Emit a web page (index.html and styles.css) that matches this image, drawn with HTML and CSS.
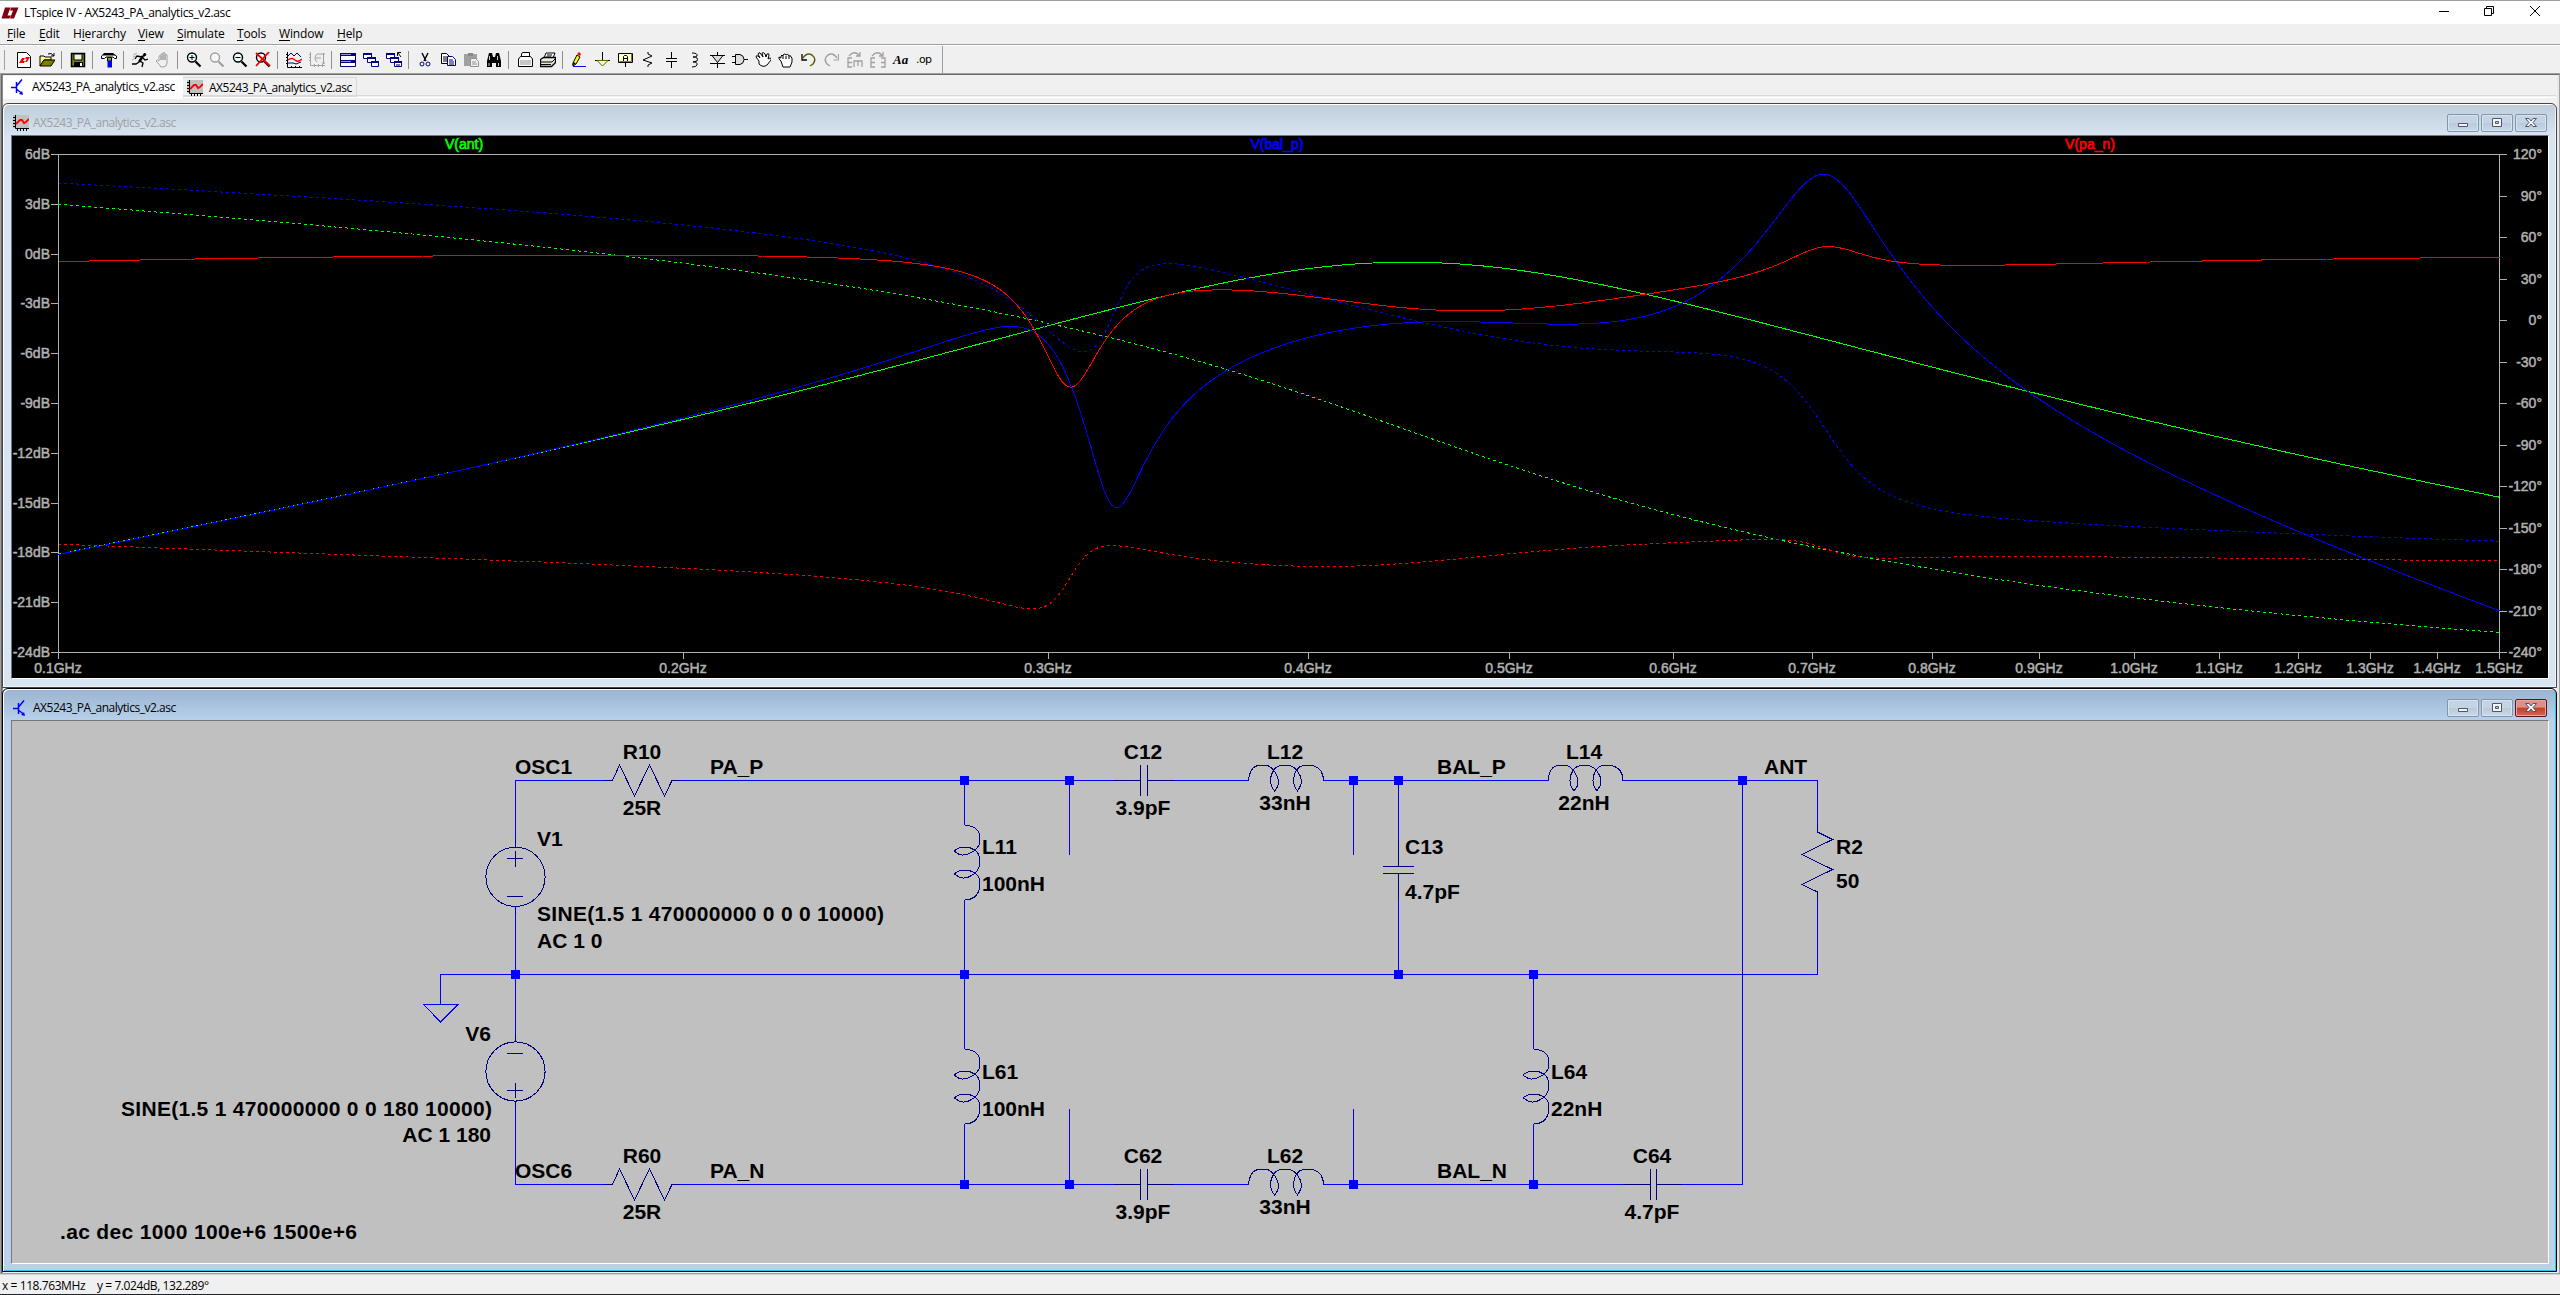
FILE: index.html
```html
<!DOCTYPE html>
<html lang="en">
<head>
<meta charset="utf-8">
<title>LTspice IV - AX5243_PA_analytics_v2.asc</title>
<link rel="stylesheet" href="styles.css">
</head>
<body>
<svg class="defs" aria-hidden="true">
  <defs>
    <symbol id="i-bjt" viewBox="0 0 16 16"><path d="M0 8.5h5M5.500 3v11M6 6.500l5-6M6 10.500l5 4" fill="none" stroke="#00f" stroke-width="1.500"/><path d="M12 16l-4-1 3-3z" fill="#00f"/></symbol>
    <symbol id="i-wave" viewBox="0 0 16 16"><path d="M0 0h16v13H0z" fill="#c0c0c0"/><path d="M2.500 0v13.500H16M0 2.500h2M0 5.500h2M0 8.500h2M0 11.500h2M4.500 14v2M7.500 14v2M10.500 14v2M13.500 14v2" fill="none" stroke="#000"/><path d="M3 9l4-4 2 0 2 3 2-1 3-3" fill="none" stroke="#f00" stroke-width="1.800"/></symbol>
    <symbol id="i-mag" viewBox="0 0 16 16"><circle cx="6" cy="5.500" r="4.500" fill="#e8ffff" stroke="currentColor" stroke-width="1.400"/><path d="M9.500 9.500l5 5" stroke="currentColor" stroke-width="2.200"/></symbol>
    <symbol id="i-casc" viewBox="0 0 16 16"><g fill="#fff" stroke="#000080"><path d="M.5 1.500h8v5h-8zM4.500 5.500h8v5h-8zM8.500 9.500h7v5h-7z"/></g><path d="M0 1h9v2H0zM4 5h9v2H4zM8 9h8v2H8z" fill="#000080"/></symbol>
    <symbol id="ind" viewBox="0 -16 76 28" overflow="visible"><path d="M0 0C1-9 4-15 11-15H19C26-12 30-4 30 2C30 6 28 8 26 10.500C24 8 22 5 22 0C22-7 26-15 34-15H41C48-13 53-5 53 1C53 6 50 8 49 10.500C47 8 45 5 45 0C45-7 49-15 56-15H64C71-13 75-8 75 0"/></symbol>
  </defs>
</svg>

<header class="titlebar">
  <svg class="logo" viewBox="0 0 16 12"><path d="M3 .5h5.500L5.500 8.500H9l-1.500 3H-.5zM9 .5h7.500l-4.500 11H8l3-8H8z" fill="#800010"/></svg>
  <span class="app-title ui">LTspice IV - AX5243_PA_analytics_v2.asc</span>
  <svg class="sysbtns" viewBox="0 0 110 24" fill="none" stroke="#000"><path d="M3 11.500h10M48.500 8.500h7v7h-7zM50.500 8.500v-2h7v7h-2M94 6l10 10M104 6l-10 10"/></svg>
</header>

<nav class="menubar ui">
  <span class="m-file"><u>F</u>ile</span><span class="m-edit"><u>E</u>dit</span><span class="m-hier">H<u>i</u>erarchy</span><span class="m-view"><u>V</u>iew</span><span class="m-sim"><u>S</u>imulate</span><span class="m-tools"><u>T</u>ools</span><span class="m-win"><u>W</u>indow</span><span><u>H</u>elp</span>
</nav>

<div class="toolbar">
  <i class="grip"></i>
  <svg class="ic" viewBox="0 0 16 16"><path d="M1.500.5h9l4 4v11h-13z" fill="#fff" stroke="#000"/><path d="M3 11l3-5h3l-2 3h2l-1 2zM9 10l2-3h-2l1-2h4l-3 5z" fill="#f00"/></svg>
  <svg class="ic" viewBox="0 0 16 16"><path d="M1 4h4l1 1h6v3H5l-4 6z" fill="#ffff80" stroke="#000"/><path d="M1 14l4-6h11l-4 6z" fill="#808000" stroke="#000"/><path d="M9 2q3-2 6 2m0-3v3h-3" fill="none" stroke="#000"/></svg>
  <i class="sep"></i>
  <svg class="ic" viewBox="0 0 16 16"><path d="M1.500 1.500h13v13h-13z" fill="#808000" stroke="#000" stroke-width="1.500"/><path d="M4 2h8v6H4z" fill="#f0f0f0" stroke="#000"/><path d="M4 10h9v5H4z" fill="#000"/><path d="M10 11h2v3h-2z" fill="#fff"/></svg>
  <i class="sep"></i>
  <svg class="ic" viewBox="0 0 16 16"><path d="M.5 6.500V4l3-2.500h8L15.500 4v2.500h-2L12 5H5L3.500 6.500z" fill="#fff" stroke="#000"/><path d="M3 1h9l2 2.500H1.500z" fill="#000"/><path d="M6.500 5.500h4V9h-4z" fill="#888" stroke="#000"/><path d="M6.500 9h4.500v6.500H6.500z" fill="#00f"/></svg>
  <i class="sep"></i>
  <svg class="ic" viewBox="0 0 16 16" fill="none" stroke="#000"><path d="M12 1.500l2 .5-1 2h-2z" fill="#000"/><path d="M11 4L7 10" stroke-width="2.500"/><path d="M10 5L5 4 3 7M11 6l2 2 3-1M8 9l3 2-1 4M7 10l-3 2-4 0" stroke-width="1.300"/><path d="M1 3l4-2M1 5l3-1M0 8l2-1" stroke="#aaa"/></svg>
  <svg class="ic" viewBox="0 0 16 16" fill="#f0f0f0" stroke="#a0a0a0"><path d="M4 9V4q1-1 2 0v4-6q1-1 2 0v6-7q1-1 2 0v7-5q1-1 2 0v8q0 4-4 4H6q-1-2-5-6 1-2 3 0z"/></svg>
  <i class="sep"></i>
  <svg class="ic" viewBox="0 0 16 16"><use href="#i-mag"/><path d="M3.500 5.500h5M6 3v5" stroke="#000"/></svg>
  <svg class="ic dim" viewBox="0 0 16 16"><use href="#i-mag"/></svg>
  <svg class="ic" viewBox="0 0 16 16"><use href="#i-mag"/><path d="M3.500 5.500h5" stroke="#000"/></svg>
  <svg class="ic" viewBox="0 0 16 16"><use href="#i-mag"/><path d="M1 1l14 13M14 0L1 14" stroke="#e00" stroke-width="1.800"/></svg>
  <i class="sep"></i>
  <svg class="ic" viewBox="0 0 16 16" fill="none"><path d="M1.500 0v15.500H16M0 2.500h2M0 5.500h2M0 8.500h2M0 11.500h2M5.500 14v2M9.500 14v2M13.500 14v2" stroke="#000"/><path d="M2 4l3-3 3 3 3-3 4 4" stroke="#000080"/><path d="M2 8q4-3 7 0t7-1" stroke="#f00" stroke-width="1.300"/><path d="M2 11h5l3 1 5-2" stroke="#000080"/></svg>
  <svg class="ic" viewBox="0 0 16 16" fill="none" stroke="#a0a0a0"><path d="M1.500 0v13.500H16M0 2.500h2M0 5.500h2M0 8.500h2M5.500 12v3M9.500 12v3M13.500 12v3M8 10q-4-4 0-8h5M7 6h5M14.500 1v11M13 2h3M13 11h3"/></svg>
  <i class="sep"></i>
  <svg class="ic" viewBox="0 0 16 16"><path d="M.5 1.500h15v13H.5z" fill="#fff" stroke="#000080"/><path d="M0 1h16v3H0zM0 8h16v3H0z" fill="#000080"/><path d="M1 2.500h10M1 9.500h10" stroke="#fff" stroke-width=".6"/></svg>
  <svg class="ic" viewBox="0 0 16 16"><use href="#i-casc"/></svg>
  <svg class="ic" viewBox="0 0 16 16"><use href="#i-casc"/><path d="M15 5l-3-4M11.500 4V.5H15M10 13h4" fill="none" stroke="#000"/></svg>
  <i class="sep"></i>
  <svg class="ic" viewBox="0 0 16 16" fill="none"><path d="M5 1l4 8M11 1L7 9" stroke="#000" stroke-width="1.400"/><circle cx="5" cy="12" r="2" stroke="#000080"/><circle cx="11" cy="12" r="2" stroke="#000080"/></svg>
  <svg class="ic" viewBox="0 0 16 16" fill="#fff"><path d="M1.500 1.500h5l3 3v7h-8z" stroke="#000"/><path d="M3 5h4M3 7h4M3 9h4" stroke="#000"/><path d="M7.500 4.500h5l3 3v6h-8z" stroke="#000080"/><path d="M9 8h4M9 10h5M9 12h5" stroke="#000080"/></svg>
  <svg class="ic" viewBox="0 0 16 16"><path d="M1 2h13v12H1z" fill="#a0a0a0"/><path d="M5 1h5v3H5z" fill="#888"/><path d="M7.500 6.500h5l3 3v5h-8z" fill="#f0f0f0" stroke="#909090"/><path d="M9 10h4M9 12h5" stroke="#909090"/></svg>
  <svg class="ic" viewBox="0 0 16 16"><path d="M3 1h3l1 4h2l1-4h3l2 8v6h-5v-4H6v4H1V9z" fill="#000"/><path d="M3.500 4v4M11.500 4v4M3 11v3M12.500 11v3" stroke="#fff" stroke-width=".8"/></svg>
  <i class="sep"></i>
  <svg class="ic" viewBox="0 0 16 16"><path d="M4.500 5v-3l1-1.500h7v4" fill="#fff" stroke="#000"/><path d="M1.500 7l2-2.500h10l2 2.500v7.500h-14z" fill="#fff" stroke="#000"/><path d="M3 8h11v5H3z" fill="#c8c8c8"/></svg>
  <svg class="ic" viewBox="0 0 16 16"><path d="M4 6l2-5h9l-2 5z" fill="#fff" stroke="#000"/><path d="M7 3h5M6 5h5" stroke="#000"/><path d="M.5 7.500l3-2h12v5l-4 4H.5z" fill="#e8e8e8" stroke="#000" stroke-width="1.300"/><path d="M1 10h11l3-3M1 12.500h10" fill="none" stroke="#000"/><path d="M6 11h4v1H6z" fill="#ff0"/></svg>
  <i class="sep"></i>
  <svg class="ic" viewBox="0 0 16 16"><path d="M2 11l4-8 3 2-4 7-3 2z" fill="#ff0" stroke="#000"/><path d="M6 2l2-2 2 2-1 2z" fill="#f00"/><path d="M1 13l2-3 2 2z" fill="#000"/><path d="M2 14.500h13" stroke="#00f"/></svg>
  <svg class="ic" viewBox="0 0 16 16" fill="none" stroke="#000"><path d="M8.500 0v8M1 8.500h15"/><path d="M3 8.500l5.500 5.500L14 8.500z" stroke="#606000" fill="#f8f8d0"/></svg>
  <svg class="ic" viewBox="0 0 16 16"><path d="M1.500 1.500h14v9h-14z" fill="#ffffd0" stroke="#000"/><path d="M2.500 9.500h12v-8" fill="none" stroke="#808000"/><path d="M6.500 9V4.500l1-1h2l1 1V9M6.500 6.500h4M8.500 11v4" fill="none" stroke="#000"/></svg>
  <svg class="ic" viewBox="0 0 16 16" fill="none" stroke="#000"><path d="M8 0v2l4 2-9 4 9 3-4 2v2"/></svg>
  <svg class="ic" viewBox="0 0 16 16" fill="none" stroke="#000"><path d="M8.500 0v6M3 6.500h11M3 9.500h11M8.500 10v6"/></svg>
  <svg class="ic" viewBox="0 0 16 16" fill="none" stroke="#000"><path d="M6 1q6 0 5 3-1 1-4 1 6 0 4 4l-4 1q5 0 4 3-1 2-5 2"/></svg>
  <svg class="ic" viewBox="0 0 16 16" fill="none" stroke="#000"><path d="M8.500 0v16M1 3.500h15M1 11.500h15"/><path d="M3 3.500h11l-5.500 7z" fill="#ddd"/></svg>
  <svg class="ic" viewBox="0 0 16 16" fill="#ddd" stroke="#000"><path d="M3.500 2.500H8q4 1 4 5t-4 5H3.500zM0 4.500h3M0 10.500h3M12 7.500h4"/></svg>
  <svg class="ic" viewBox="0 0 16 16" fill="#fff" stroke="#000"><path d="M4 9L1 5q0-2 2-1l2 2L3 2q1-2 2-1l3 4-1-4q2-1 3 1l1 3 1-3q2-1 2 1l-1 4 2-1q2 0 1 2l-4 5q-4 3-8-1z"/></svg>
  <svg class="ic" viewBox="0 0 16 16" fill="#fff" stroke="#000"><path d="M3 9q-3-2-2-4l2 1V4q1-2 2 0V3q2-2 3 0 2-2 3 1 2-1 2 1l1 1v4l-2 5H5z"/><path d="M5 4v3M8 4v3M11 4v3"/></svg>
  <svg class="ic" viewBox="0 0 16 16" fill="none"><path d="M2 6q4-6 9-3 5 4 1 9l-3 2" stroke="#606000" stroke-width="1.500"/><path d="M1 2v6h5" stroke="#000" stroke-width="1.300"/></svg>
  <svg class="ic" viewBox="0 0 16 16" fill="none" stroke="#a0a0a0"><path d="M13 6Q9 0 4 3-1 7 3 12l3 2" stroke-width="1.500"/><path d="M14.500 2v6h-5"/></svg>
  <svg class="ic" viewBox="0 0 16 16" fill="none" stroke="#a0a0a0" stroke-width="1.300"><path d="M5 6H1v9h4M1 10.500h4M7 15V9h8v6M11 9v5M2 4q5-6 10-1M13 0v4H9"/></svg>
  <svg class="ic" viewBox="0 0 16 16" fill="none" stroke="#a0a0a0" stroke-width="1.300"><path d="M5 6H1v9h4M1 10.500h4M11 6h4v9h-4M11 10.500h4M2 4q5-6 10-1M13 0v4H9"/></svg>
  <span class="ic glyph-aa">Aa</span>
  <span class="ic glyph-op">.op</span>
  <i class="endline"></i>
</div>

<main class="client">
  <div class="tabs ui">
    <div class="tab active"><svg class="ti" viewBox="0 0 16 16"><use href="#i-bjt"/></svg><span class="fname">AX5243_PA_analytics_v2.asc</span></div>
    <div class="tab"><svg class="ti" viewBox="0 0 16 16"><use href="#i-wave"/></svg><span class="fname">AX5243_PA_analytics_v2.asc</span></div>
  </div>

  <section class="child plotwin">
    <div class="caption ui">
      <svg class="ti" viewBox="0 0 16 16"><use href="#i-wave"/></svg><span class="fname">AX5243_PA_analytics_v2.asc</span>
      <div class="btns">
        <b><svg viewBox="0 0 30 16"><path d="M10.500 8.500h9v3h-9z"/></svg></b>
        <b><svg viewBox="0 0 30 16"><path d="M10.500 3.500h9v8h-9zM13.500 6.500v2h3v-2z"/></svg></b>
        <b><svg viewBox="0 0 30 16"><path d="M9.500 3.500h3.500l2 2.500 2-2.500h3.500l-3.500 4 3.500 4H17l-2-2.500-2 2.500H9.500l3.500-4z"/></svg></b>
      </div>
    </div>
    <svg class="view" id="plot" viewBox="12 136 2536 542">
      <g class="axis" id="axes"></g>
      <g id="traces" class="traces"></g>
      <g class="plabel">
        <text x="464" y="149" fill="#0f0">V(ant)</text>
        <text x="1277" y="149" fill="#00f">V(bal_p)</text>
        <text x="2090" y="149" fill="#f00">V(pa_n)</text>
      </g>
    </svg>
  </section>

  <section class="child schem">
    <div class="caption ui">
      <svg class="ti" viewBox="0 0 16 16"><use href="#i-bjt"/></svg><span class="fname">AX5243_PA_analytics_v2.asc</span>
      <div class="btns">
        <b><svg viewBox="0 0 30 16"><path d="M10.500 8.500h9v3h-9z"/></svg></b>
        <b><svg viewBox="0 0 30 16"><path d="M10.500 3.500h9v8h-9zM13.500 6.500v2h3v-2z"/></svg></b>
        <b class="close"><svg viewBox="0 0 30 16"><path d="M9.500 3.500h3.500l2 2.500 2-2.500h3.500l-3.500 4 3.500 4H17l-2-2.500-2 2.500H9.500l3.500-4z"/></svg></b>
      </div>
    </div>
    <svg class="view" viewBox="12 721 2536 542">
      <g class="wire">
        <path d="M515.500 847V780.500H613M672 780.500H1140M1147 780.500H1248.500M1323.500 780.500H1548.500M1622.500 780.500H1817.500V832"/>
        <path d="M964.500 780V825M964.500 900V1049M964.500 1124V1184M1069.500 780V855M1353.500 780V855M1398.500 780V866M1398.500 873V974M1742.500 780V1184M1817.500 892V974"/>
        <path d="M1817.500 974.500H440.500V1004.500M423.500 1004.500H458L440.500 1022ZM515.500 906V1042M515.500 1101V1184.500H613M672 1184.500H1140M1147 1184.500H1248.500M1323.500 1184.500H1650M1657 1184.500H1742.500"/>
        <path d="M1533.500 974V1049M1533.500 1124V1184M1069.500 1184V1109M1353.500 1184V1109"/>
      </g>
      <g class="part">
        <path d="M605 780.500H612.500L619.500 765L634.500 796L649.500 765L664.500 796L672 780.500H679"/>
        <path d="M605 1184.500H612.500L619.500 1169L634.500 1200L649.500 1169L664.500 1200L672 1184.500H679"/>
        <path d="M1817.500 825V832L1832.500 839.500L1802 854.500L1832.500 869.500L1802 884.500L1817.500 892V900"/>
        <path d="M1114 780.500H1140.500M1140.500 765V796M1147.500 765V796M1147.500 780.500H1174M1114 1184.500H1140.500M1140.500 1169V1200M1147.500 1169V1200M1147.500 1184.500H1174M1623 1184.500H1650.500M1650.500 1169V1200M1656.500 1169V1200M1656.500 1184.500H1682"/>
        <path d="M1383 866.500H1414M1383 873.500H1414M1398.500 840V866M1398.500 873V900"/>
        <circle cx="515.500" cy="876.800" r="29.600"/><circle cx="515.500" cy="1071.500" r="29.600"/>
        <path d="M507 858.500H523M515.500 851V867M507 896.500H523M515.500 839V847M515.500 906V914M507 1053.500H523M507 1090.500H523M515.500 1083V1098M515.500 1034V1042M515.500 1101V1109"/>
        <g id="coils"></g>
      </g>
      <g class="node">
        <path d="M960 776h9v9h-9zM1065 776h9v9h-9zM1349 776h9v9h-9zM1394 776h9v9h-9zM1738 776h9v9h-9zM511 970h9v9h-9zM960 970h9v9h-9zM1394 970h9v9h-9zM1529 970h9v9h-9zM960 1180h9v9h-9zM1065 1180h9v9h-9zM1349 1180h9v9h-9zM1529 1180h9v9h-9z"/>
      </g>
      <g class="txt">
        <text x="515" y="774">OSC1</text><text x="710" y="774">PA_P</text><text x="1437" y="774">BAL_P</text><text x="1764" y="774">ANT</text>
        <text x="537" y="846">V1</text>
        <text x="537" y="921" textLength="347">SINE(1.5 1 470000000 0 0 0 10000)</text>
        <text x="537" y="948">AC 1 0</text>
        <text x="982" y="854">L11</text><text x="982" y="891">100nH</text>
        <text x="1405" y="854">C13</text><text x="1405" y="899">4.7pF</text>
        <text x="1836" y="854">R2</text><text x="1836" y="888">50</text>
        <text x="982" y="1079">L61</text><text x="982" y="1116">100nH</text>
        <text x="1551" y="1079">L64</text><text x="1551" y="1116">22nH</text>
        <text x="515" y="1178">OSC6</text><text x="710" y="1178">PA_N</text><text x="1437" y="1178">BAL_N</text>
        <text x="60" y="1239" textLength="297">.ac dec 1000 100e+6 1500e+6</text>
      </g>
      <g class="txt mid">
        <text x="642" y="759">R10</text><text x="642" y="815">25R</text>
        <text x="1143" y="759">C12</text><text x="1143" y="815">3.9pF</text>
        <text x="1285" y="759">L12</text><text x="1285" y="810">33nH</text>
        <text x="1584" y="759">L14</text><text x="1584" y="810">22nH</text>
        <text x="642" y="1163">R60</text><text x="642" y="1219">25R</text>
        <text x="1143" y="1163">C62</text><text x="1143" y="1219">3.9pF</text>
        <text x="1285" y="1163">L62</text><text x="1285" y="1214">33nH</text>
        <text x="1652" y="1163">C64</text><text x="1652" y="1219">4.7pF</text>
      </g>
      <g class="txt end">
        <text x="491" y="1041">V6</text>
        <text x="492" y="1116" textLength="371">SINE(1.5 1 470000000 0 0 180 10000)</text>
        <text x="491" y="1142">AC 1 180</text>
      </g>
    </svg>
  </section>
</main>

<footer class="status ui"><span class="sx">x = 118.763MHz</span><span class="sy">y = 7.024dB, 132.289°</span></footer>
<script src="plot.js"></script>
</body>
</html>
```
FILE: plot.js
```js
const NS = 'http://www.w3.org/2000/svg';
function add(parent, tag, attrs, text) {
  const e = document.createElementNS(NS, tag);
  for (const k in attrs) e.setAttribute(k, attrs[k]);
  if (text) e.textContent = text;
  parent.appendChild(e);
  return e;
}

// Coils of the schematic
const coil = document.querySelector('#ind path').getAttribute('d');
['1248.5 780.5', '1548 780.5', '1248.5 1184.5'].forEach(p =>
  add(document.getElementById('coils'), 'path', { d: coil, transform: `translate(${p})` }));
['964.5 825', '964.5 1049', '1533.5 1049'].forEach(p =>
  add(document.getElementById('coils'), 'path', { d: coil, transform: `translate(${p}) rotate(90)` }));

// Plot frame
const L = 58, R = 2499, T = 154, B = 652;
const X = f => L + (R - L) * Math.log(f / 1e8) / Math.log(15);
const Ydb = v => T + (6 - v) * (B - T) / 30;
const Ydeg = v => T + (120 - v) * (B - T) / 360;
const axes = document.getElementById('axes');
let d = `M${L + .5} ${B + 7}V${T + .5}H${R + .5}V${B + 7}M${L} ${B + .5}H${R}`;
for (let v = 6; v >= -24; v -= 3) {
  const y = Math.round(Ydb(v));
  d += `M51 ${y + .5}H${L}`;
  add(axes, 'text', { x: 50, y: y + 5, 'text-anchor': 'end' }, v + 'dB');
}
for (let v = 120; v >= -240; v -= 30) {
  const y = Math.round(Ydeg(v));
  d += `M${R} ${y + .5}H${R + 8}`;
  add(axes, 'text', { x: 2542, y: y + 5, 'text-anchor': 'end' }, v + '°');
}
for (let i = 1; i <= 15; i++) {
  const x = Math.round(X(i * 1e8));
  d += `M${x + .5} ${B}v7`;
  add(axes, 'text', { x: x, y: 673, 'text-anchor': 'middle' }, (i / 10).toFixed(1) + 'GHz');
}
add(axes, 'path', { d });

// AC analysis of the two arms of the balun
const c = (r, i = 0) => [r, i];
const plus = (a, b) => [a[0] + b[0], a[1] + b[1]];
const minus = (a, b) => [a[0] - b[0], a[1] - b[1]];
const mul = (a, b) => [a[0] * b[0] - a[1] * b[1], a[0] * b[1] + a[1] * b[0]];
const div = (a, b) => {
  const n = b[0] * b[0] + b[1] * b[1];
  return [(a[0] * b[0] + a[1] * b[1]) / n, (a[1] * b[0] - a[0] * b[1]) / n];
};
const par = (a, b) => div(mul(a, b), plus(a, b));

function solve(f) {
  const w = 2 * Math.PI * f;
  const ind = l => c(1e-3, w * l), cap = k => c(0, -1 / (w * k));
  const arm = (v, zShunt, zOut) => {
    const zl = ind(100e-9), zs = plus(cap(3.9e-12), ind(33e-9));
    let vt = div(mul(v, zl), plus(c(25), zl)), zt = plus(par(c(25), zl), zs);
    vt = div(mul(vt, zShunt), plus(zShunt, zt));
    return { v: vt, z: plus(par(zt, zShunt), zOut), zs };
  };
  const zL14 = ind(22e-9), zC64 = cap(4.7e-12), zL64 = ind(22e-9);
  const a = arm(c(1), cap(4.7e-12), zL14), b = arm(c(-1), zL64, zC64);
  const y = plus(plus(div(c(1), a.z), div(c(1), b.z)), c(1 / 50));
  const ant = div(plus(div(a.v, a.z), div(b.v, b.z)), y);
  const balp = plus(ant, mul(div(minus(a.v, ant), a.z), zL14));
  const ib = div(minus(b.v, ant), b.z), baln = plus(ant, mul(ib, zC64));
  const pan = plus(baln, mul(plus(ib, div(baln, zL64)), b.zs));
  return [ant, balp, pan];
}

const colors = ['#0f0', '#00f', '#f00'], start = [83, 98, -162];
const mag = ['', '', ''], ph = ['', '', ''], last = start.slice();
for (let n = 0; n <= 1200; n++) {
  const f = 1e8 * Math.pow(15, n / 1200);
  solve(f).forEach((v, k) => {
    const cmd = (n ? 'L' : 'M') + (X(f) + .5).toFixed(1) + ' ';
    mag[k] += cmd + (Ydb(20 * Math.log10(Math.hypot(v[0], v[1]))) + .5).toFixed(1);
    let p = Math.atan2(v[1], v[0]) * 180 / Math.PI;
    p += 360 * Math.round((last[k] - p) / 360);
    last[k] = p;
    ph[k] += cmd + (Ydeg(p) + .5).toFixed(1);
  });
}
const tr = document.getElementById('traces');
colors.forEach((col, k) => {
  add(tr, 'path', { d: ph[k], stroke: col, 'stroke-dasharray': '3 3' });
  add(tr, 'path', { d: mag[k], stroke: col });
});
```
FILE: styles.css
```css
* { box-sizing: border-box; }
html, body { margin: 0; height: 1295px; overflow: hidden; }
body { display: flex; flex-direction: column; width: 2560px; background: #f0f0f0; color: #000; }
.defs { display: none; }
.ui { font: 12px/16px "Open Sans", "Noto Sans", sans-serif; white-space: nowrap; }
.fname { display: inline-block; letter-spacing: -.48px; }

.titlebar { display: flex; align-items: center; height: 24px; background: #fff; border-top: 1px solid #a0a0a0; }
.logo { width: 16px; height: 12px; margin: 0 6px 0 2px; overflow: visible; }
.app-title { letter-spacing: -.36px; }
.sysbtns { width: 110px; height: 24px; margin: -1px 14px 0 auto; padding: 0; }
.menubar { display: flex; align-items: center; height: 22px; padding: 0 0 2px 7px; border-bottom: 1px solid #fff; box-shadow: inset 0 -1px #a0a0a0; letter-spacing: -.15px; }
.menubar u { text-underline-offset: 2px; text-decoration-thickness: 1px; }
.m-file { width: 32px; } .m-edit { width: 34px; } .m-hier { width: 65px; } .m-view { width: 39px; }
.m-sim { width: 60px; } .m-tools { width: 42px; } .m-win { width: 58px; }

.toolbar { display: flex; align-items: flex-start; height: 28px; padding: 6px 0 0 4px; }
.grip { width: 1px; height: 20px; margin: -2px 11px 0 0; background: #a0a0a0; }
.ic { flex: none; width: 16px; height: 16px; margin-right: 7px; color: #000; }
.dim { color: #a0a0a0; filter: grayscale(1); }
.sep { width: 1px; height: 18px; margin: -1px 8px 0 -1px; background: #909090; }
.glyph-aa { font: italic bold 13px/16px "Liberation Serif", serif; }
.glyph-op { font: 11px/15px "DejaVu Sans", sans-serif; letter-spacing: -.6px; }
.endline { width: 1px; height: 28px; margin: -6px 0 0 3px; background: #a0a0a0; }

.client { display: flex; flex-direction: column; height: 1199px; border: solid #696969; border-width: 1px 0 0 1px; box-shadow: inset 1px 0 #8a8a8a, inset -2px 0 #e8e8e8; outline: 1px solid #a0a0a0; margin-left: 1px; width: 2558px; background: #f0f0f0; }
.tabs { display: flex; height: 28px; margin: 0 3px 0 1px; padding-top: 1px; background: linear-gradient(#d9d9d9, #d9d9d9) 0 20px / 100% 1px no-repeat, linear-gradient(#fff, #fff) 0 22px / 100% 1px no-repeat; }
.tab { display: flex; align-items: center; height: 20px; margin-top: 1px; padding: 1px 4px 0; width: 174px; border: 1px solid #d9d9d9; border-left: 0; }
.tab.active { height: 23px; margin-top: 0; width: 180px; padding: 0 7px 1px 8px; background: #fff; border: 0; }
.ti { flex: none; width: 16px; height: 16px; margin-right: 6px; }
.tab.active .ti { margin-right: 5px; }

.child { display: flex; flex-direction: column; flex: none; margin: 0 2px 0 0; border: 1px solid #454545; border-radius: 6px 6px 0 0; }
.plotwin { height: 585px; padding: 0 8px 7px; background: linear-gradient(#bfcddb, #d7e4f2 32px, #d7e4f2); box-shadow: inset 1px 1px #fff, inset -1px -1px #eef4fb; }
.schem { height: 584px; padding: 0 8px 7px; background: linear-gradient(#99b4d1, #b9d1ea 32px, #b9d1ea); border-color: #000; box-shadow: inset 1px 1px #fff, inset -1px -1px #28c8e0; }
.caption { display: flex; align-items: center; flex: none; height: 31px; padding: 6px 0 0 2px; }
.caption .ti { margin-right: 4px; }
.plotwin .caption { color: #a0a0a0; }
.btns { display: flex; gap: 2px; margin: 0 1px 0 auto; }
.btns b { width: 32px; height: 18px; border: 1px solid #8493b0; border-radius: 2px; box-shadow: inset 0 0 0 1px #d6e3f1; background: linear-gradient(#c5d4e4 50%, #b8c9dc 50%, #cbd9e8); }
.btns svg { display: block; width: 30px; height: 16px; }
.btns path { fill: #f5f5f5; stroke: #4d5470; fill-rule: evenodd; }
.btns .close { border-color: #5a1420; box-shadow: inset 0 0 0 1px #e6a89c; background: linear-gradient(#dc9184 45%, #c0402c 50%, #cf6a4f); }
.view { display: block; flex: none; width: 2538px; height: 544px; border: 1px solid; border-color: #777 #fff #fff #777; }
.plotwin .view { background: #000; }
.schem .view { background: #c0c0c0; }

.axis path { fill: none; stroke: #b0b0b0; shape-rendering: crispEdges; }
.axis text { font: 14px "Liberation Sans", sans-serif; fill: #b0b0b0; stroke: #b0b0b0; stroke-width: .5; }
.plabel text { font: 14px "Liberation Sans", sans-serif; text-anchor: middle; stroke-width: .7; }
.plabel text:nth-child(1) { stroke: #0f0; } .plabel text:nth-child(2) { stroke: #00f; } .plabel text:nth-child(3) { stroke: #f00; }
.traces path { fill: none; shape-rendering: crispEdges; }
.wire path { fill: none; stroke: #00f; shape-rendering: crispEdges; }
.part path, .part circle { fill: none; stroke: #000080; shape-rendering: crispEdges; }
.node path { fill: #00f; }
.txt { font: bold 21px "Liberation Sans", sans-serif; fill: #000; }
.mid { text-anchor: middle; }
.end { text-anchor: end; }

.status { display: flex; height: 21px; margin-top: auto; padding: 3px 0 0 2px; border-top: 1px solid #d0d0d0; border-bottom: 1px solid #20242c; letter-spacing: -.42px; }
.sx { width: 95px; }
```
